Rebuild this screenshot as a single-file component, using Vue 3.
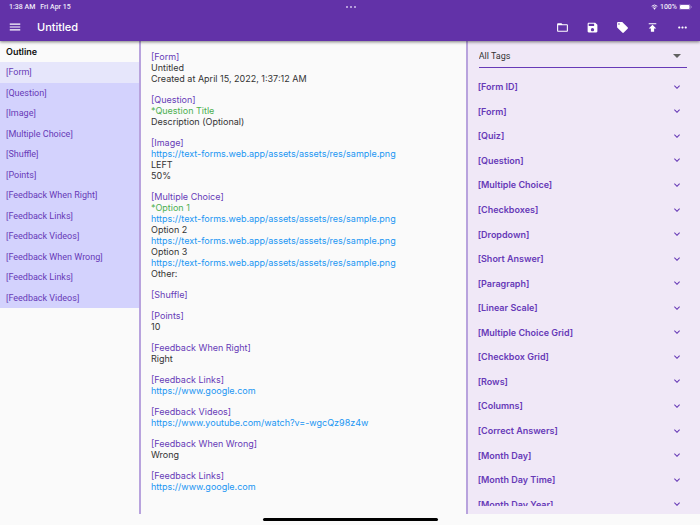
<script setup>
import { ref } from 'vue'

const outline = [
  '[Form]', '[Question]', '[Image]', '[Multiple Choice]', '[Shuffle]', '[Points]',
  '[Feedback When Right]', '[Feedback Links]', '[Feedback Videos]',
  '[Feedback When Wrong]', '[Feedback Links]', '[Feedback Videos]',
]
const selected = ref(0)

const sample = 'https://text-forms.web.app/assets/assets/res/sample.png'
const blocks = [
  ['[Form]', 'Untitled', 'Created at April 15, 2022, 1:37:12 AM'],
  ['[Question]', '*Question Title', 'Description (Optional)'],
  ['[Image]', sample, 'LEFT', '50%'],
  ['[Multiple Choice]', '*Option 1', sample, 'Option 2', sample, 'Option 3', sample, 'Other:'],
  ['[Shuffle]'],
  ['[Points]', '10'],
  ['[Feedback When Right]', 'Right'],
  ['[Feedback Links]', 'https://www.google.com'],
  ['[Feedback Videos]', 'https://www.youtube.com/watch?v=-wgcQz98z4w'],
  ['[Feedback When Wrong]', 'Wrong'],
  ['[Feedback Links]', 'https://www.google.com'],
]
const isLink = (line) => line.startsWith('https://')
const kind = (line) => (line.startsWith('[') ? 'tag' : line.startsWith('*') ? 'required' : 'plain')

const filter = ref('All Tags')
const tags = [
  '[Form ID]', '[Form]', '[Quiz]', '[Question]', '[Multiple Choice]', '[Checkboxes]',
  '[Dropdown]', '[Short Answer]', '[Paragraph]', '[Linear Scale]', '[Multiple Choice Grid]',
  '[Checkbox Grid]', '[Rows]', '[Columns]', '[Correct Answers]', '[Month Day]',
  '[Month Day Time]', '[Month Day Year]',
]

const actions = [
  { label: 'Open', d: 'M20 6h-8l-2-2H4c-1.100 0-2 .9-2 2v12c0 1.100.9 2 2 2h16c1.100 0 2-.9 2-2V8c0-1.100-.9-2-2-2zm0 12H4V8h16v10z' },
  { label: 'Save', d: 'M17 3H5c-1.110 0-2 .9-2 2v14c0 1.100.890 2 2 2h14c1.100 0 2-.9 2-2V7l-4-4zm-5 16c-1.660 0-3-1.340-3-3s1.340-3 3-3 3 1.340 3 3-1.340 3-3 3zm3-10H5V5h10v4z' },
  { label: 'Tags', d: 'M21.410 11.580l-9-9C12.050 2.220 11.550 2 11 2H4c-1.100 0-2 .9-2 2v7c0 .550.220 1.050.590 1.420l9 9c.360.360.860.580 1.410.580s1.050-.220 1.410-.590l7-7c.370-.360.590-.860.590-1.410s-.230-1.060-.590-1.420zM5.500 7C4.670 7 4 6.330 4 5.500S4.670 4 5.500 4 7 4.670 7 5.500 6.330 7 5.500 7z' },
  { label: 'Publish', d: 'M5 4v2h14V4H5zm0 10h4v6h6v-6h4l-7-7-7 7z' },
  { label: 'More', d: 'M6 10c-1.100 0-2 .9-2 2s.9 2 2 2 2-.9 2-2-.9-2-2-2zm12 0c-1.100 0-2 .9-2 2s.9 2 2 2 2-.9 2-2-.9-2-2-2zm-6 0c-1.100 0-2 .9-2 2s.9 2 2 2 2-.9 2-2-.9-2-2-2z' },
]
</script>

<template>
  <div class="app">
    <header class="top">
      <div class="status">
        <div class="clock"><span>1:38 AM</span><span>Fri Apr 15</span></div>
        <div class="dots"><i></i><i></i><i></i></div>
        <div class="power">
          <svg class="wifi" viewBox="0 0 16 12" aria-hidden="true">
            <path d="M1.500 4.300a9.500 9.500 0 0 1 13 0M4 7a6 6 0 0 1 8 0" fill="none" stroke="#fff" stroke-width="2" />
            <path d="M8 12L5.500 9.200a3.600 3.600 0 0 1 5 0z" fill="#fff" />
          </svg>
          <span>100%</span>
          <svg class="battery" viewBox="0 0 26 12" aria-hidden="true">
            <rect x=".5" y=".5" width="22" height="11" rx="3.500" fill="none" stroke="#fff" stroke-opacity=".5" />
            <rect x="2" y="2" width="19" height="8" rx="2" fill="#fff" />
            <path d="M24 4v4a2.200 2.200 0 0 0 0-4z" fill="#fff" fill-opacity=".6" />
          </svg>
        </div>
      </div>
      <div class="bar">
        <button class="icon menu" aria-label="Menu">
          <svg viewBox="0 0 24 24"><path d="M3 18h18v-2H3v2zm0-5h18v-2H3v2zm0-7v2h18V6H3z" /></svg>
        </button>
        <h1>Untitled</h1>
        <nav class="actions">
          <button v-for="a in actions" :key="a.label" class="icon" :aria-label="a.label">
            <svg viewBox="0 0 24 24"><path :d="a.d" /></svg>
          </button>
        </nav>
      </div>
    </header>

    <main class="columns">
      <aside class="outline">
        <h2>Outline</h2>
        <div class="outline-list">
          <button
            v-for="(item, i) in outline"
            :key="i"
            :class="{ active: i === selected }"
            @click="selected = i"
          >{{ item }}</button>
        </div>
      </aside>

      <article class="editor">
        <section v-for="(block, b) in blocks" :key="b">
          <template v-for="(line, l) in block" :key="l">
            <div v-if="isLink(line)"><a :href="line">{{ line }}</a></div>
            <div v-else :class="kind(line)">{{ line }}</div>
          </template>
        </section>
      </article>

      <aside class="tags">
        <div class="filter">
          <select v-model="filter" aria-label="Tag filter">
            <option>All Tags</option>
          </select>
          <svg viewBox="0 0 10 5" aria-hidden="true"><path d="M0 0h10L5 5z" /></svg>
        </div>
        <div class="tag-scroll">
          <div class="tag-list">
            <button v-for="tag in tags" :key="tag">
              <span>{{ tag }}</span>
              <svg viewBox="0 0 24 24" aria-hidden="true"><path d="M16.590 8.590L12 13.170 7.410 8.590 6 10l6 6 6-6z" /></svg>
            </button>
          </div>
        </div>
      </aside>
    </main>

    <footer class="home"><span></span></footer>
  </div>
</template>

<style>
body {
  background: #fafafa;
}
</style>

<style scoped>
.app {
  display: flex;
  flex-direction: column;
  height: 100vh;
  overflow: hidden;
  background: #fafafa;
  font-family: Inter, "Liberation Sans", sans-serif;
  font-size: 9px;
  color: #333;
}
button {
  border: 0;
  padding: 0;
  background: none;
  font: inherit;
  color: inherit;
  text-align: left;
  cursor: pointer;
}
svg {
  display: block;
}
.top {
  position: relative;
  flex: none;
  background: #6232a8;
  color: #fff;
  box-shadow: 0 1px 3px rgba(0, 0, 0, 0.5);
}
.status {
  display: grid;
  grid-template-columns: 1fr auto 1fr;
  align-items: center;
  height: 13px;
  padding: 0 8px 0 9px;
  font-family: Roboto, sans-serif;
  font-size: 7px;
  font-weight: 500;
  color: #f0eaf8;
}
.clock {
  display: flex;
  gap: 5px;
}
.dots {
  display: flex;
  gap: 2px;
}
.dots i {
  width: 2px;
  height: 2px;
  border-radius: 1px;
  background: #d3c2ec;
}
.power {
  display: flex;
  justify-content: flex-end;
  align-items: center;
  gap: 2px;
}
.wifi {
  width: 7px;
  height: 6px;
}
.battery {
  width: 13px;
  height: 6px;
}
.bar {
  display: flex;
  align-items: center;
  height: 28px;
  padding: 0 11px 0 8px;
}
.icon svg {
  width: 13px;
  height: 13px;
  fill: #fff;
}
.menu svg {
  width: 14px;
  height: 14px;
}
h1 {
  margin: 0 auto 0 15px;
  font-size: 11px;
  font-weight: 500;
}
.actions {
  display: flex;
  gap: 17px;
}
.columns {
  display: grid;
  grid-template-columns: 3fr 7fr 5fr;
  flex: 1;
  min-height: 0;
}
.outline {
  border-right: 1px solid #b8a3dd;
  color: #673ab7;
}
h2 {
  margin: 0;
  padding-left: 6px;
  font-size: 9px;
  font-weight: 600;
  line-height: 21px;
  color: #111;
}
.outline-list {
  display: grid;
  grid-auto-rows: 1fr;
  min-height: 246px;
  font-family: Roboto, sans-serif;
}
.outline-list button {
  padding-left: 6px;
  background: #d3d2fd;
}
.outline-list .active {
  background: #e6e6fb;
}
.editor {
  display: flex;
  flex-direction: column;
  gap: 10px;
  border: 0 solid #b8a3dd;
  border-width: 0 1px;
  padding: 10px 10px 0;
  overflow: hidden;
  line-height: 11px;
}
.editor .tag {
  color: #673ab7;
}
.editor .required {
  color: #4caf50;
}
.editor a {
  color: #2196f3;
  text-decoration: none;
}
.tags {
  display: flex;
  flex-direction: column;
  min-height: 0;
  border-left: 1px solid #b8a3dd;
  background: #f0e8f7;
  padding: 4px 13px 8px 10px;
}
.filter {
  display: flex;
  align-items: center;
  height: 22px;
  margin-left: 1px;
  border-bottom: 1px solid #673ab7;
  padding-right: 6px;
}
.filter select {
  flex: 1;
  appearance: none;
  border: 0;
  padding: 0;
  background: none;
  font-family: Roboto, sans-serif;
  font-size: 9px;
  color: #333;
}
.filter svg {
  width: 8px;
  height: 4px;
  fill: #616161;
}
.tag-scroll {
  flex: 1;
  min-height: 0;
  margin-top: 7px;
  overflow: hidden;
}
.tag-list {
  display: grid;
  grid-auto-rows: 1fr;
  min-height: 442px;
}
.tag-list button {
  display: flex;
  align-items: center;
  justify-content: space-between;
  padding: 0 4px 1px 0;
  font-weight: 600;
  color: #673ab7;
}
.tag-list svg {
  width: 12px;
  height: 12px;
  fill: #673ab7;
}
.home {
  display: flex;
  align-items: center;
  justify-content: center;
  flex: none;
  height: 11px;
}
.home span {
  width: 25%;
  height: 3px;
  border-radius: 2px;
  background: #000;
}
</style>
